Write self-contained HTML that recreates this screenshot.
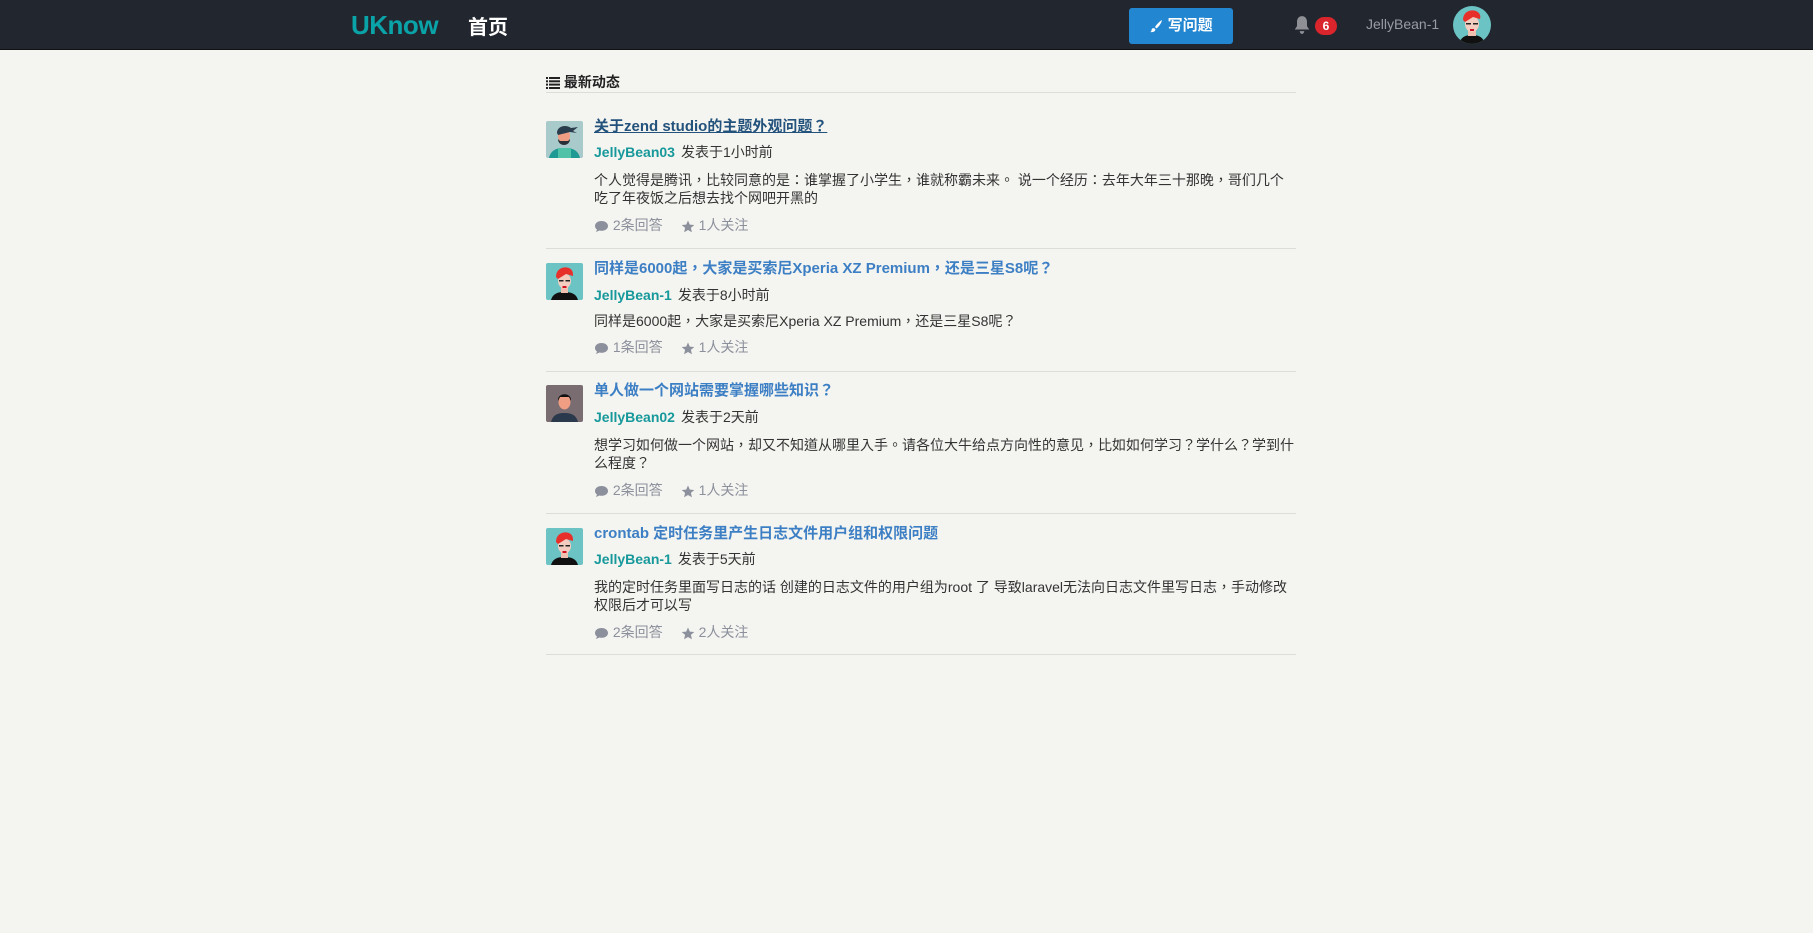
<!DOCTYPE html>
<html><head><meta charset="utf-8"><style>
*{margin:0;padding:0;box-sizing:border-box}
body{width:1813px;height:933px;background:#f4f4f0;font-family:"Liberation Sans","Noto Sans CJK TC",sans-serif;color:#333;overflow:hidden;position:relative}
.nav{position:absolute;left:0;top:0;width:1813px;height:50px;background:#22262f;border-bottom:1px solid #111}
.logo{position:absolute;left:351px;top:10px;font-size:26px;color:#0aa3a8;font-weight:bold;letter-spacing:-0.5px}
.home{position:absolute;left:468px;top:11px;font-size:20px;color:#fff;font-weight:bold}
.btn{position:absolute;left:1129px;top:8px;width:104px;height:36px;background:#2386d0;border-radius:3px;color:#fff;font-weight:bold;font-size:15px;line-height:36px;text-align:center}
.bell{position:absolute;left:1292px;top:15px}
.badge{position:absolute;left:1315px;top:17px;width:22px;height:18px;border-radius:9px;background:#d9252b;color:#fff;font-size:12px;font-weight:bold;text-align:center;line-height:18px}
.uname{position:absolute;left:1366px;top:16px;font-size:14px;color:#9a9ca4}
.uav{position:absolute;left:1453px;top:6px;width:38px;height:38px;border-radius:50%;overflow:hidden}
.main{position:absolute;left:546px;top:0;width:750px}
.head{position:absolute;top:72px;left:0;width:750px;height:21px;border-bottom:1px solid #dcdcd8;font-weight:bold;font-size:14px;color:#222}
.item{position:absolute;left:0;width:750px;border-bottom:1px solid #dcdcd8}
.av{position:absolute;left:0;width:37px;height:37px;border-radius:2px;overflow:hidden}
.t{position:absolute;left:48px;font-size:15px;font-weight:bold;color:#3d7fc4;line-height:20px;white-space:nowrap}
.a{position:absolute;left:48px;font-size:14px;line-height:20px;color:#333;white-space:nowrap}
.a b{color:#17999b;margin-right:6px}
.b{position:absolute;left:48px;font-size:14px;line-height:18px;color:#333;white-space:nowrap}
.s{position:absolute;left:48px;font-size:14px;line-height:20px;color:#8c909c;white-space:nowrap}
.s span{margin-right:18px}
svg{vertical-align:middle}
</style></head><body>
<div class="nav">
<div class="logo">UKnow</div>
<div class="home">首页</div>
<div class="btn"><svg width="14" height="14" viewBox="0 0 14 14"><path d="M13 1 C11 2 8 5 6 8 L7.5 9.5 C10 7.5 12.5 4 13 1Z M5 9 C3 9 2.5 10.5 2.5 11.5 C2.5 12.5 1.5 13 1 13 C3 13.5 6 13 6.5 10.5Z" fill="#fff"/></svg> 写问题</div>
<div class="bell"><svg width="20" height="20" viewBox="0 0 18 18"><path d="M9 1 C6 1 4.5 3.5 4.5 6 L4.5 10 L2.5 13 L15.5 13 L13.5 10 L13.5 6 C13.5 3.5 12 1 9 1Z M7 14.5 C7 16 8 17 9 17 C10 17 11 16 11 14.5Z" fill="#8e9096"/></svg></div>
<div class="badge">6</div>
<div class="uname">JellyBean-1</div>
<div class="uav"><svg width="38" height="38" viewBox="0 0 38 38"><rect width="38" height="38" fill="#6cc3c4"/><path d="M6 38 C8 30 14 29 19 29 C24 29 30 30 32 38Z" fill="#111"/><rect x="15" y="22" width="8" height="8" fill="#f0c0b0"/><ellipse cx="19" cy="18" rx="7" ry="8" fill="#f3cdbf"/><path d="M10 14 C10 6 17 3 23 5 C27 7 28 10 27 13 L20 11 L12 16Z" fill="#e8302a"/><rect x="13" y="17" width="5" height="1.5" fill="#222"/><rect x="20" y="17" width="5" height="1.5" fill="#222"/><rect x="17" y="23" width="4" height="2" fill="#d01020"/></svg></div>
</div>

<div class="main">
<div class="head"><svg width="14" height="12" viewBox="0 0 14 12"><g fill="#222"><rect x="0" y="0" width="2" height="2"/><rect x="3" y="0" width="11" height="2"/><rect x="0" y="3.3" width="2" height="2"/><rect x="3" y="3.3" width="11" height="2"/><rect x="0" y="6.6" width="2" height="2"/><rect x="3" y="6.6" width="11" height="2"/><rect x="0" y="10" width="2" height="2"/><rect x="3" y="10" width="11" height="2"/></g></svg> 最新动态</div>

<!-- item 1 -->
<div class="item" style="top:94px;height:155px">
<div class="av" style="top:27px"><svg width="37" height="37" viewBox="0 0 37 37"><rect width="37" height="37" fill="#a9cacb"/><path d="M3 37 C5 28 12 27 18 27 C25 27 32 28 34 37Z" fill="#1d9a94"/><rect x="12" y="27" width="13" height="10" fill="#4fc2a8"/><ellipse cx="18" cy="15" rx="6" ry="7" fill="#ef9d83"/><path d="M12 18 C12 26 24 26 24 18 L22 20 L14 20Z" fill="#2a3038"/><path d="M11 12 C11 5 20 3 25 7 L32 6 L27 10 L31 12 L24 11 L12 14Z" fill="#2a3d4c"/></svg></div>
<div class="t" style="top:23px;color:#23527c;text-decoration:underline">关于zend studio的主题外观问题？</div>
<div class="a" style="top:48px"><b>JellyBean03</b>发表于1小时前</div>
<div class="b" style="top:77px">个人觉得是腾讯，比较同意的是：谁掌握了小学生，谁就称霸未来。 说一个经历：去年大年三十那晚，哥们几个<br>吃了年夜饭之后想去找个网吧开黑的</div>
<div class="s" style="top:121px"><span><svg width="15" height="13" viewBox="0 0 15 13"><path d="M7.5 1 C3.5 1 1 3.3 1 6 C1 7.5 1.8 8.7 3 9.5 L2 12 L5.5 10.5 C6.1 10.7 6.8 10.8 7.5 10.8 C11.5 10.8 14 8.6 14 6 C14 3.3 11.5 1 7.5 1Z" fill="#8c909c"/></svg> 2条回答</span><span><svg width="14" height="13" viewBox="0 0 14 13"><path d="M7 0.5 L8.8 4.6 L13.3 5 L9.9 7.9 L10.9 12.3 L7 10 L3.1 12.3 L4.1 7.9 L0.7 5 L5.2 4.6Z" fill="#8c909c"/></svg> 1人关注</span></div>
</div>

<!-- item 2 -->
<div class="item" style="top:249px;height:123px">
<div class="av" style="top:14px"><svg width="37" height="37" viewBox="0 0 37 37"><rect width="37" height="37" fill="#6cc3c4"/><path d="M5 37 C7 30 13 29 18 29 C24 29 30 30 32 37Z" fill="#111"/><rect x="15" y="22" width="7" height="8" fill="#f0c0b0"/><ellipse cx="18.5" cy="18" rx="6.5" ry="7.5" fill="#f3cdbf"/><path d="M10 14 C10 6 17 3 23 5 C27 7 27 10 27 13 L20 11 L12 16Z" fill="#e8302a"/><rect x="13" y="17" width="4.5" height="1.5" fill="#222"/><rect x="19.5" y="17" width="4.5" height="1.5" fill="#222"/><rect x="16.5" y="23" width="4" height="2" fill="#d01020"/></svg></div>
<div class="t" style="top:10px">同样是6000起，大家是买索尼Xperia XZ Premium，还是三星S8呢？</div>
<div class="a" style="top:36px"><b>JellyBean-1</b>发表于8小时前</div>
<div class="b" style="top:63px">同样是6000起，大家是买索尼Xperia XZ Premium，还是三星S8呢？</div>
<div class="s" style="top:88px"><span><svg width="15" height="13" viewBox="0 0 15 13"><path d="M7.5 1 C3.5 1 1 3.3 1 6 C1 7.5 1.8 8.7 3 9.5 L2 12 L5.5 10.5 C6.1 10.7 6.8 10.8 7.5 10.8 C11.5 10.8 14 8.6 14 6 C14 3.3 11.5 1 7.5 1Z" fill="#8c909c"/></svg> 1条回答</span><span><svg width="14" height="13" viewBox="0 0 14 13"><path d="M7 0.5 L8.8 4.6 L13.3 5 L9.9 7.9 L10.9 12.3 L7 10 L3.1 12.3 L4.1 7.9 L0.7 5 L5.2 4.6Z" fill="#8c909c"/></svg> 1人关注</span></div>
</div>

<!-- item 3 -->
<div class="item" style="top:372px;height:142px">
<div class="av" style="top:13px"><svg width="37" height="37" viewBox="0 0 37 37"><rect width="37" height="37" fill="#7a6d72"/><path d="M5 37 C7 29 13 28 18 28 C24 28 30 29 32 37Z" fill="#2a3a4c"/><ellipse cx="18.5" cy="17" rx="6" ry="7.5" fill="#ef9d83"/><path d="M12 16 C11 7 26 7 25 16 L23 12 L14 12Z" fill="#111"/></svg></div>
<div class="t" style="top:9px">单人做一个网站需要掌握哪些知识？</div>
<div class="a" style="top:35px"><b>JellyBean02</b>发表于2天前</div>
<div class="b" style="top:64px">想学习如何做一个网站，却又不知道从哪里入手。请各位大牛给点方向性的意见，比如如何学习？学什么？学到什<br>么程度？</div>
<div class="s" style="top:108px"><span><svg width="15" height="13" viewBox="0 0 15 13"><path d="M7.5 1 C3.5 1 1 3.3 1 6 C1 7.5 1.8 8.7 3 9.5 L2 12 L5.5 10.5 C6.1 10.7 6.8 10.8 7.5 10.8 C11.5 10.8 14 8.6 14 6 C14 3.3 11.5 1 7.5 1Z" fill="#8c909c"/></svg> 2条回答</span><span><svg width="14" height="13" viewBox="0 0 14 13"><path d="M7 0.5 L8.8 4.6 L13.3 5 L9.9 7.9 L10.9 12.3 L7 10 L3.1 12.3 L4.1 7.9 L0.7 5 L5.2 4.6Z" fill="#8c909c"/></svg> 1人关注</span></div>
</div>

<!-- item 4 -->
<div class="item" style="top:514px;height:141px">
<div class="av" style="top:14px"><svg width="37" height="37" viewBox="0 0 37 37"><rect width="37" height="37" fill="#6cc3c4"/><path d="M5 37 C7 30 13 29 18 29 C24 29 30 30 32 37Z" fill="#111"/><rect x="15" y="22" width="7" height="8" fill="#f0c0b0"/><ellipse cx="18.5" cy="18" rx="6.5" ry="7.5" fill="#f3cdbf"/><path d="M10 14 C10 6 17 3 23 5 C27 7 27 10 27 13 L20 11 L12 16Z" fill="#e8302a"/><rect x="13" y="17" width="4.5" height="1.5" fill="#222"/><rect x="19.5" y="17" width="4.5" height="1.5" fill="#222"/><rect x="16.5" y="23" width="4" height="2" fill="#d01020"/></svg></div>
<div class="t" style="top:10px">crontab 定时任务里产生日志文件用户组和权限问题</div>
<div class="a" style="top:35px"><b>JellyBean-1</b>发表于5天前</div>
<div class="b" style="top:64px">我的定时任务里面写日志的话 创建的日志文件的用户组为root 了 导致laravel无法向日志文件里写日志，手动修改<br>权限后才可以写</div>
<div class="s" style="top:108px"><span><svg width="15" height="13" viewBox="0 0 15 13"><path d="M7.5 1 C3.5 1 1 3.3 1 6 C1 7.5 1.8 8.7 3 9.5 L2 12 L5.5 10.5 C6.1 10.7 6.8 10.8 7.5 10.8 C11.5 10.8 14 8.6 14 6 C14 3.3 11.5 1 7.5 1Z" fill="#8c909c"/></svg> 2条回答</span><span><svg width="14" height="13" viewBox="0 0 14 13"><path d="M7 0.5 L8.8 4.6 L13.3 5 L9.9 7.9 L10.9 12.3 L7 10 L3.1 12.3 L4.1 7.9 L0.7 5 L5.2 4.6Z" fill="#8c909c"/></svg> 2人关注</span></div>
</div>
</div>
</body></html>
